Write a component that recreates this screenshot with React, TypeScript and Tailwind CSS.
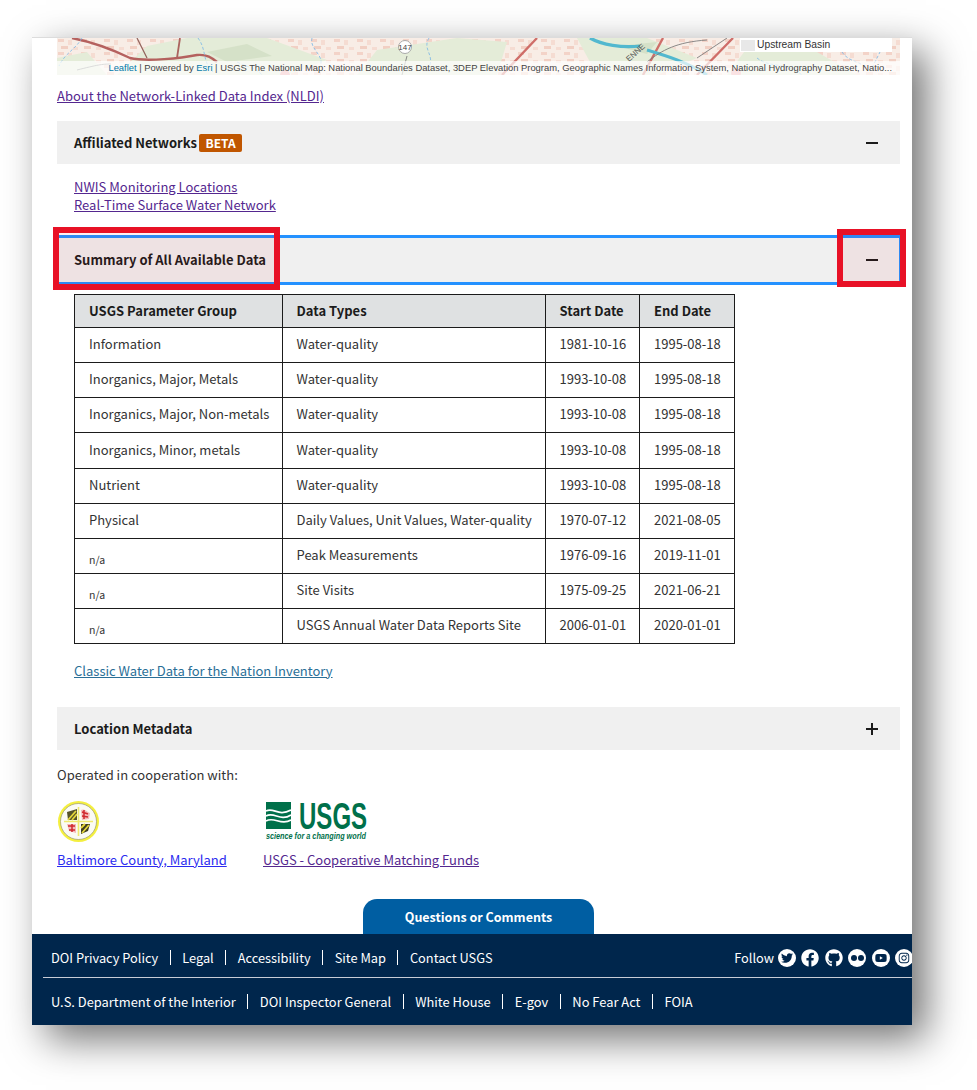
import React from "react";
import { FaTwitter, FaFacebook, FaGithub, FaYoutube, FaInstagram } from "react-icons/fa";

const rows = [
  ["Information", "Water-quality", "1981-10-16", "1995-08-18"],
  ["Inorganics, Major, Metals", "Water-quality", "1993-10-08", "1995-08-18"],
  ["Inorganics, Major, Non-metals", "Water-quality", "1993-10-08", "1995-08-18"],
  ["Inorganics, Minor, metals", "Water-quality", "1993-10-08", "1995-08-18"],
  ["Nutrient", "Water-quality", "1993-10-08", "1995-08-18"],
  ["Physical", "Daily Values, Unit Values, Water-quality", "1970-07-12", "2021-08-05"],
  ["n/a", "Peak Measurements", "1976-09-16", "2019-11-01"],
  ["n/a", "Site Visits", "1975-09-25", "2021-06-21"],
  ["n/a", "USGS Annual Water Data Reports Site", "2006-01-01", "2020-01-01"],
];

const font = { fontFamily: '"Noto Sans CJK SC", "Noto Sans", sans-serif' };

function Minus() {
  return <span className="block h-[2px] w-[12px] bg-[#1b1b1b]" />;
}

function MapStrip() {
  return (
    <div className="relative h-[37px] w-[843px] overflow-hidden bg-[#f3efe6]">
      <svg width="843" height="37" viewBox="0 0 843 37" className="block">
        <defs>
          <pattern id="urban" width="23" height="13" patternUnits="userSpaceOnUse">
            <rect width="23" height="13" fill="#f8ede6" />
            <rect x="1" y="1" width="6" height="3" fill="#f3d3c8" />
            <rect x="11" y="2" width="4" height="5" fill="#f5dcd2" />
            <rect x="4" y="8" width="7" height="3" fill="#f1cfc3" />
            <rect x="16" y="9" width="5" height="3" fill="#f5dcd2" />
          </pattern>
          <filter id="soft"><feGaussianBlur stdDeviation="0.7" /></filter>
        </defs>
        <g filter="url(#soft)">
          <rect width="843" height="37" fill="url(#urban)" />
          <path d="M60 37 L90 8 L130 0 L210 0 L270 22 L230 37Z M300 37 L320 12 L400 0 L450 4 L440 37Z M520 0 L590 0 L640 20 L600 37 L540 37Z M690 10 L760 14 L800 37 L670 37Z M0 20 L30 14 L50 37 L0 37Z" fill="#e4ecd8" />
          <path d="M150 14 L190 6 L215 18 L170 24Z M560 8 L600 4 L590 16Z" fill="#d5e1c8" />
        </g>
        <g filter="url(#soft)" opacity="0.95">
          <path d="M15 0 C30 3 46 7 73 20 C90 24 125 20 140 17 C150 16 155 20 160 24" stroke="#b25a58" strokeWidth="2.4" fill="none" />
          <path d="M80 0 L90 20" stroke="#8e5d56" strokeWidth="1.3" fill="none" />
          <path d="M123 0 L120 20" stroke="#a85d58" strokeWidth="1.8" fill="none" />
          <path d="M480 0 L445 37 M606 0 L586 37 M676 0 L640 37" stroke="#cd6763" strokeWidth="2.4" fill="none" />
          <path d="M533 0 C545 7 565 10 583 8 M590 12 C610 18 630 24 650 37" stroke="#4bb6cf" strokeWidth="3.2" fill="none" />
          <path d="M590 24 C605 12 620 4 650 2 M20 32 C40 27 45 26 54 26 M350 18 L345 37 M640 20 L670 0" stroke="#777" strokeWidth="0.9" fill="none" />
          <path d="M25 0 C18 12 8 15 2 28 M141 0 C150 12 145 24 156 34 M180 24 C192 30 200 30 205 37 M255 0 C252 12 270 18 262 30 M372 0 C365 12 378 16 372 30 M700 20 C712 30 730 24 745 37 M785 14 C792 24 800 22 810 30 M830 0 L815 30" stroke="#7fb9e6" strokeWidth="0.9" strokeDasharray="3 2" fill="none" />
          <circle cx="679" cy="35" r="5" fill="#ef9aa0" />
          <circle cx="228" cy="37" r="5" fill="#ef9aa0" />
        </g>
        <circle cx="348" cy="9" r="6.5" fill="#fff" stroke="#aaa" />
        <text x="348" y="12" textAnchor="middle" fontSize="8" fill="#444" fontFamily="Liberation Sans">147</text>
        <text x="572" y="24" fontSize="8" fill="#555" fontFamily="Liberation Sans" transform="rotate(-42 572 24)">ENNE</text>
      </svg>
      <div className="absolute left-[683px] top-0 flex h-[14px] w-[152px] items-center bg-white pl-[1px] text-[10.3px] leading-[12px] text-[#333]" style={{ fontFamily: '"Liberation Sans", sans-serif' }}>
        <span className="mr-[2px] h-[11px] w-[14px] bg-[#e8e8e8]" />
        Upstream Basin
      </div>
      <div className="absolute bottom-0 left-0 right-0 flex h-[14px] items-center justify-end whitespace-nowrap bg-white/70 pr-[8px] text-[9.4px] leading-[14px] text-[#444]" style={{ fontFamily: '"Liberation Sans", sans-serif' }}>
        <span className="text-[#0078a8]">Leaflet</span>&nbsp;| Powered by&nbsp;<span className="text-[#0078a8]">Esri</span>&nbsp;| USGS The National Map: National Boundaries Dataset, 3DEP Elevation Program, Geographic Names Information System, National Hydrography Dataset, Natio...
      </div>
    </div>
  );
}

function Seal() {
  return (
    <svg width="43" height="43" viewBox="0 0 43 43" className="block">
      <circle cx="21.5" cy="21.5" r="20.5" fill="#f4ef3f" />
      <circle cx="21.5" cy="21.5" r="18" fill="#fbfbf4" stroke="#8a8a66" strokeWidth=".6" />
      <path d="M10 12 L20 9 L20 20 L11 20Z" fill="#56532a" />
      <path d="M11 20 L19 11 M15 20 L20 14" stroke="#e5d73a" strokeWidth="1.8" />
      <path d="M24 10 C28 8 30 12 33 13 L32 19 L25 20Z" fill="#f3b9b9" />
      <path d="M25 12 l6 2 M25 16 l6 1 M27 10 v9" stroke="#d0282f" strokeWidth="1.5" />
      <path d="M10 24 L19 24 L19 33 L12 31Z" fill="#f3b9b9" />
      <path d="M11 26 h7 M12 30 h6 M15 24 v8" stroke="#d0282f" strokeWidth="1.5" />
      <path d="M24 24 L33 24 L31 31 L24 34Z" fill="#3f3d20" />
      <path d="M25 33 L32 25 M24 28 L28 24" stroke="#e5d73a" strokeWidth="1.8" />
      <path d="M21.5 7 V36 M7 21.5 H36" stroke="#efe96f" strokeWidth="1.6" />
    </svg>
  );
}

function UsgsLogo() {
  return (
    <svg width="102" height="39" viewBox="0 0 102 39" className="block overflow-visible">
      <rect x="0" y="0" width="25" height="27" fill="#00704a" />
      <path d="M0 9 C8 5 12 15 25 8 M0 14 C8 9 14 20 25 13 M0 19 C8 14 15 24 25 18" stroke="#fff" strokeWidth="1.7" fill="none" />
      <text transform="translate(33 27) scale(0.65 1)" fontSize="37" fontWeight="700" fill="#00704a" fontFamily="Liberation Sans">USGS</text>
      <text transform="translate(0 37) scale(0.855 1)" fontSize="8.5" fontWeight="700" fontStyle="italic" fill="#00704a" fontFamily="Liberation Sans">science for a changing world</text>
    </svg>
  );
}

function Sep() {
  return <span className="mx-[11.5px] h-[15px] w-px bg-white" />;
}

const circled = "flex h-[18px] w-[18px] items-center justify-center rounded-full bg-white text-[#00264c]";

export default function App() {
  return (
    <div className="min-h-[1090px] w-[977px] overflow-hidden bg-white pl-[32px] pt-[37px]" style={font}>
      <div className="w-[880px] overflow-hidden border-t border-[#dcdcdc] bg-white text-[13px] leading-[18px] text-[#333] shadow-[14px_14px_38px_rgba(0,0,0,0.56)]">
        <div className="pl-[25px] pr-[12px]">
          <MapStrip />
          <div className="mt-[12px] h-[18px]"><a className="text-[#54278f] underline">About the Network-Linked Data Index (NLDI)</a></div>

          <div className="mt-[16px] flex h-[43px] items-center justify-between bg-[#f0f0f0] pl-[17px] pr-[22px]">
            <div className="flex items-center">
              <span className="font-bold text-[#1b1b1b]">Affiliated Networks</span>
              <span className="ml-[2px] rounded-[2px] bg-[#c05600] px-[6.5px] text-[12px] font-bold leading-[18px] text-white">BETA</span>
            </div>
            <Minus />
          </div>
          <div className="mt-[14px] flex flex-col items-start pl-[17px]">
            <a className="text-[#54278f] underline">NWIS Monitoring Locations</a>
            <a className="text-[#54278f] underline">Real-Time Surface Water Network</a>
          </div>

          <div className="relative mt-[21px] flex h-[50px] items-center justify-between border-y-[3px] border-r border-[#2491ff] bg-[#f0f0f0] pl-[17px] pr-[21px]">
            <span className="font-bold text-[#1b1b1b]">Summary of All Available Data</span>
            <Minus />
            <div className="absolute -left-[4px] -top-[11px] h-[63px] w-[227px] border-[6px] border-[#e81126] bg-[#e0101a]/[0.06]" />
            <div className="absolute -right-[7px] -top-[9px] h-[58px] w-[69px] border-[6px] border-[#e81126] bg-[#e0101a]/[0.06]" />
          </div>

          <div className="mt-[9px] pl-[17px]">
            <table className="w-[660px] table-fixed border-collapse border border-[#1b1b1b]">
              <colgroup>
                <col className="w-[207.5px]" />
                <col className="w-[263px]" />
                <col className="w-[94.5px]" />
                <col className="w-[95px]" />
              </colgroup>
              <thead>
                <tr className="h-[33px] bg-[#dfe1e2] text-left">
                  {["USGS Parameter Group", "Data Types", "Start Date", "End Date"].map((h) => (
                    <th key={h} className="border border-[#1b1b1b] px-[14px] py-0 font-bold text-[#1b1b1b]">{h}</th>
                  ))}
                </tr>
              </thead>
              <tbody>
                {rows.map((r, i) => (
                  <tr key={i} className={i === 3 ? "h-[36px]" : "h-[35px]"}>
                    <td className={`whitespace-nowrap border border-[#1b1b1b] px-[14px] py-0 ${r[0] === "n/a" ? "pt-[8px] text-[10.5px]" : "pb-[2px]"}`}>{r[0]}</td>
                    <td className="whitespace-nowrap border border-[#1b1b1b] px-[14px] py-0 pb-[2px]">{r[1]}</td>
                    <td className="whitespace-nowrap border border-[#1b1b1b] px-[14px] py-0 pb-[2px]">{r[2]}</td>
                    <td className="whitespace-nowrap border border-[#1b1b1b] px-[14px] py-0 pb-[2px]">{r[3]}</td>
                  </tr>
                ))}
              </tbody>
            </table>
            <div className="mt-[18px] h-[18px]"><a className="text-[#2a6f97] underline">Classic Water Data for the Nation Inventory</a></div>
          </div>

          <div className="mt-[27px] flex h-[43px] items-center justify-between bg-[#f0f0f0] pl-[17px] pr-[22px]">
            <span className="font-bold text-[#1b1b1b]">Location Metadata</span>
            <span className="relative block h-[12px] w-[12px]">
              <span className="absolute left-0 top-[5px] h-[2px] w-[12px] bg-[#1b1b1b]" />
              <span className="absolute left-[5px] top-0 h-[12px] w-[2px] bg-[#1b1b1b]" />
            </span>
          </div>

          <p className="mt-[16px]">Operated in cooperation with:</p>

          <div className="mt-[16px] flex">
            <div className="w-[206px]">
              <div className="h-[43px]"><Seal /></div>
              <a className="mt-[8px] block text-[#2b2bf0] underline">Baltimore County, Maryland</a>
            </div>
            <div>
              <div className="h-[43px] pl-[3px] pt-[2px]"><UsgsLogo /></div>
              <a className="mt-[8px] block text-[#54278f] underline">USGS - Cooperative Matching Funds</a>
            </div>
          </div>

          <div className="mt-[30px] flex justify-center">
            <a className="flex h-[35px] w-[231px] items-center justify-center rounded-t-[14px] bg-[#005ea2] text-[12.5px] font-semibold text-white">Questions or Comments</a>
          </div>
        </div>

        <footer className="h-[91px] bg-[#00264c] text-[12.8px] text-white">
          <div className="ml-[11px] flex h-[44px] items-center justify-between border-b border-[#c8ccd6] pl-[8px] pt-[4px]">
            <div className="flex items-center">
              <a>DOI Privacy Policy</a><Sep />
              <a>Legal</a><Sep />
              <a>Accessibility</a><Sep />
              <a>Site Map</a><Sep />
              <a>Contact USGS</a>
            </div>
            <div className="mr-[-1px] flex items-center gap-[5.4px]">
              <span className="mr-[-1.4px]">Follow</span>
              <span className={circled}><FaTwitter size={12} /></span>
              <FaFacebook size={18} />
              <FaGithub size={18} />
              <span className={`${circled} gap-[1px]`}>
                <span className="h-[6px] w-[6px] rounded-full bg-[#00264c]" />
                <span className="h-[6px] w-[6px] rounded-full bg-[#00264c]" />
              </span>
              <span className={circled}><FaYoutube size={12} /></span>
              <span className={circled}><FaInstagram size={12} /></span>
            </div>
          </div>
          <div className="ml-[19px] flex h-[47px] items-center text-[12.9px]">
            <a>U.S. Department of the Interior</a><Sep />
            <a>DOI Inspector General</a><Sep />
            <a>White House</a><Sep />
            <a>E-gov</a><Sep />
            <a>No Fear Act</a><Sep />
            <a>FOIA</a>
          </div>
        </footer>
      </div>
    </div>
  );
}
